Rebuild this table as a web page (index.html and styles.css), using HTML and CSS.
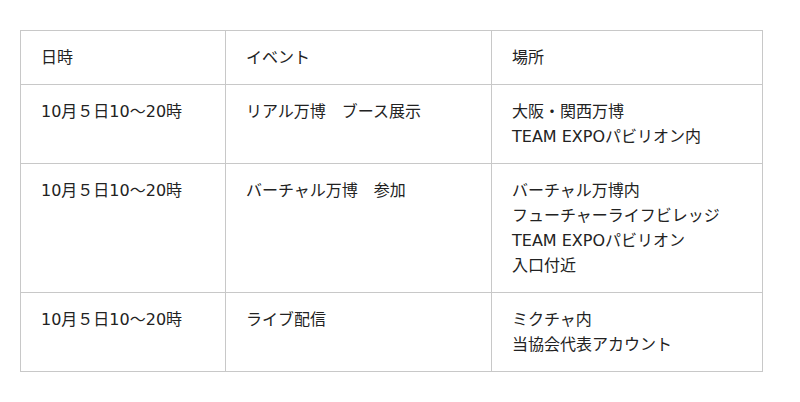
FILE: index.html
```html
<!DOCTYPE html>
<html>
<head>
<meta charset="utf-8">
<link rel="stylesheet" href="styles.css">
</head>
<body>
<table class="schedule">
  <colgroup>
    <col class="c1"><col class="c2"><col class="c3">
  </colgroup>
  <tr><td>日時</td><td>イベント</td><td>場所</td></tr>
  <tr><td>10月５日10〜20時</td><td>リアル万博　ブース展示</td><td>大阪・関西万博<br>TEAM EXPOパビリオン内</td></tr>
  <tr><td>10月５日10〜20時</td><td>バーチャル万博　参加</td><td>バーチャル万博内<br>フューチャーライフビレッジ<br>TEAM EXPOパビリオン<br>入口付近</td></tr>
  <tr><td>10月５日10〜20時</td><td>ライブ配信</td><td>ミクチャ内<br>当協会代表アカウント</td></tr>
</table>
</body>
</html>
```

FILE: styles.css
```css
html, body {
  margin: 0;
  background: #fff;
}
body {
  padding: 30px 20px;
  font-family: "DejaVu Sans", "Noto Sans CJK JP", sans-serif;
  font-size: 16px;
  line-height: 25px;
  color: #222;
}
.schedule {
  border-collapse: collapse;
  table-layout: fixed;
  width: 742px;
  border: 1px solid #ddd;
}
.c1 { width: 205px; }
.c2 { width: 266px; }
.c3 { width: 271px; }
.schedule td {
  border: 1px solid #c8c8c8;
  padding: 14px 20px 14px 20px;
  vertical-align: top;
  text-align: left;
}
```
